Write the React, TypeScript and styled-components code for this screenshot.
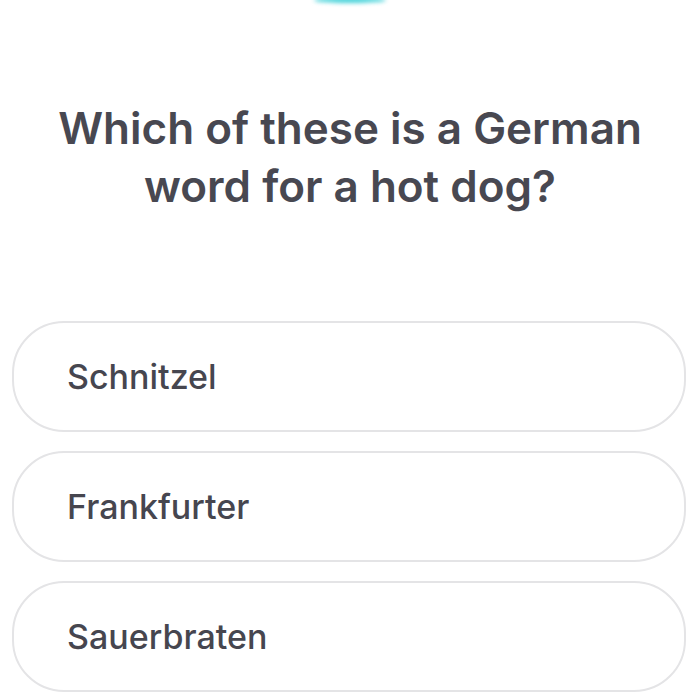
import React from "react";
import styled, { createGlobalStyle } from "styled-components";

const Global = createGlobalStyle`
  html, body { margin: 0; padding: 0; background: #ffffff; }
  body { font-family: "Inter", "Liberation Sans", sans-serif; }
`;

const Page = styled.div`
  width: 700px;
  height: 700px;
  overflow: hidden;
  display: flex;
  flex-direction: column;
  background: #fff;
`;

const TimerTop = styled.div`
  display: flex;
  justify-content: center;
  height: 0;
  overflow: visible;
`;

const Glow = styled.div`
  width: 72px;
  height: 6px;
  margin-top: -3px;
  border-radius: 50%;
  background: #48d3da;
  filter: blur(2px);
`;

const Question = styled.h1`
  margin: 99px 0 0;
  padding: 0 20px;
  text-align: center;
  font-size: 44px;
  line-height: 58px;
  font-weight: 600;
  color: #484851;
  letter-spacing: 0;
`;

const Options = styled.div`
  margin: 106px 14px 0 12px;
  display: flex;
  flex-direction: column;
  gap: 19px;
`;

const Option = styled.button`
  height: 111px;
  box-sizing: border-box;
  border: 2px solid #e4e4e6;
  border-radius: 52px;
  background: #fff;
  display: flex;
  align-items: center;
  padding: 0 0 0 53px;
  font-family: "Inter", "Liberation Sans", sans-serif;
  font-size: 34px;
  font-weight: 500;
  color: #46464f;
  text-align: left;
`;

const options = ["Schnitzel", "Frankfurter", "Sauerbraten"];

export default function App() {
  return (
    <Page>
      <Global />
      <TimerTop>
        <Glow />
      </TimerTop>
      <Question>
        Which of these is a German
        <br />
        word for a hot dog?
      </Question>
      <Options>
        {options.map((o) => (
          <Option key={o}>{o}</Option>
        ))}
      </Options>
    </Page>
  );
}
